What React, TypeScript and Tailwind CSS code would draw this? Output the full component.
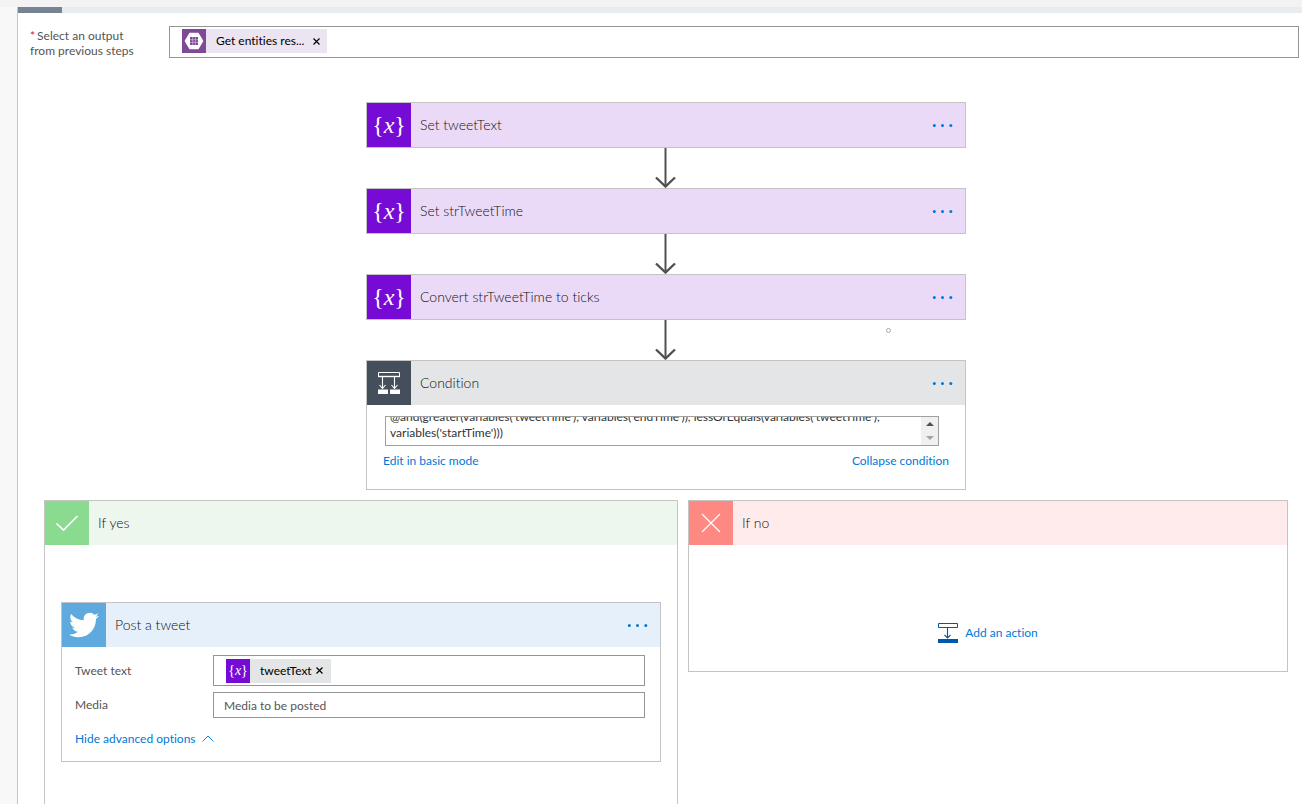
import React, { useEffect, useRef } from 'react';
import { FaTwitter } from 'react-icons/fa';

const expression =
  "@and(greater(variables('tweetTime'), variables('endTime')), lessOrEquals(variables('tweetTime'), variables('startTime')))";

function VariableIcon({ small = false }: { small?: boolean }) {
  return (
    <span
      className={`flex shrink-0 items-center justify-center bg-[#770bd6] text-white font-['Liberation_Serif',serif] ${
        small ? 'h-6 w-6 text-sm leading-6' : 'h-11 w-[44px] text-2xl leading-10'
      }`}
      aria-hidden="true"
    >
      {'{'}
      <i>x</i>
      {'}'}
    </span>
  );
}

function EntityIcon() {
  return (
    <svg className="h-6 w-6 shrink-0 bg-[#804998]" viewBox="0 0 24 24" aria-hidden="true">
      <path d="M8 4.5h8l4.5 7.5-4.5 7.5H8L3.5 12z" fill="#fff" stroke="#fff" strokeWidth="1.5" strokeLinejoin="round" />
      <path d="M8 8h8v8H8z" fill="#804998" />
      <path d="M10.7 8v8M13.4 8v8M8 10.7h8M8 13.4h8" stroke="#cdb5d8" strokeWidth="0.7" />
    </svg>
  );
}

function ConditionIcon() {
  return (
    <span className="flex h-11 w-[44px] shrink-0 items-center justify-center bg-[#454f5b]">
      <svg width="22" height="22" viewBox="0 0 22 22" fill="none" stroke="#fff" aria-hidden="true">
        <path d="M.5 .5h21v4H.5z" strokeWidth="1" />
        <path d="M0 4.5h22" strokeWidth="1.4" />
        <path d="M4.5 5v11M1.5 13l3 3.5 3-3.5M16.5 5v11M13.5 13l3 3.5 3-3.5" strokeWidth="1.1" />
        <path d="M0 17.5h10V22H0zM12 17.5h10V22H12z" fill="#fff" stroke="none" />
      </svg>
    </span>
  );
}

function Arrow() {
  return (
    <svg className="mx-auto block" width="24" height="40" viewBox="0 0 24 40" fill="none" stroke="#505050" aria-hidden="true">
      <path d="M11.5 0v38" strokeWidth="2" />
      <path d="M2 29.5l9.5 9 9.5-9" strokeWidth="2.4" />
    </svg>
  );
}

function MenuButton() {
  return (
    <button type="button" aria-label="Menu" className="mr-[10px] ml-auto flex h-6 w-6 items-center justify-center">
      <svg width="22" height="4" viewBox="0 0 22 4" fill="#0078d7" aria-hidden="true">
        <circle cx="2.3" cy="2.5" r="1.5" />
        <circle cx="10.5" cy="2.5" r="1.5" />
        <circle cx="18.8" cy="2.5" r="1.5" />
      </svg>
    </button>
  );
}

function Title({ children }: { children: React.ReactNode }) {
  return <h2 className="ml-[9px] text-[14px] leading-5 font-light text-[#111]">{children}</h2>;
}

function VariableStep({ title }: { title: string }) {
  return (
    <>
      <section className="mx-auto flex w-full max-w-[600px] items-center border border-[#c4c4c4] bg-[#ebdaf7]">
        <VariableIcon />
        <Title>{title}</Title>
        <MenuButton />
      </section>
      <Arrow />
    </>
  );
}

function RemoveButton({ label }: { label: string }) {
  return (
    <button type="button" aria-label={label} className="flex h-4 w-4 items-center justify-center">
      <svg width="7" height="7" viewBox="0 0 7 7" stroke="currentColor" strokeWidth="1.2" aria-hidden="true">
        <path d="M.5 .5l6 6M6.5 .5l-6 6" />
      </svg>
    </button>
  );
}

function ConditionCard() {
  const boxRef = useRef<HTMLTextAreaElement>(null);

  const scroll = (amount: number) => {
    if (boxRef.current) boxRef.current.scrollTop += amount;
  };

  useEffect(() => {
    if (boxRef.current) boxRef.current.scrollTop = 10;
  }, []);

  return (
    <section className="mx-auto w-full max-w-[600px] border border-[#c4c4c4] bg-white">
      <header className="flex items-center bg-[#e3e5e6]">
        <ConditionIcon />
        <Title>Condition</Title>
        <MenuButton />
      </header>
      <div className="px-4 pt-[11px] pb-[19px]">
        <div className="mr-[10px] ml-0.5 flex h-[30px] border border-[#a0a0a0]">
          <textarea
            ref={boxRef}
            aria-label="Condition expression"
            defaultValue={expression}
            className="block h-7 min-w-0 flex-1 resize-none overflow-hidden px-1 pt-0.5 pb-1 text-[12px] leading-4 text-[#333] outline-none"
          />
          <div className="flex w-[17px] flex-col bg-[#f0f0f0]">
            <button type="button" aria-label="Scroll up" onClick={() => scroll(-16)} className="flex flex-1 items-center justify-center">
              <svg width="8" height="4" viewBox="0 0 8 4" fill="#505050"><path d="M0 4l4-4 4 4z" /></svg>
            </button>
            <button type="button" aria-label="Scroll down" onClick={() => scroll(16)} className="flex flex-1 items-center justify-center">
              <svg width="8" height="4" viewBox="0 0 8 4" fill="#a3a3a3"><path d="M0 0l4 4 4-4z" /></svg>
            </button>
          </div>
        </div>
        <div className="mt-1.5 flex justify-between text-[12px] leading-[18px] text-[#0078d7]">
          <button type="button">Edit in basic mode</button>
          <button type="button">Collapse condition</button>
        </div>
      </div>
    </section>
  );
}

function PostTweetCard() {
  return (
    <section className="border border-[#c4c4c4] bg-white">
      <header className="flex items-center bg-[#e6f0fa]">
        <span className="flex h-11 w-[44px] shrink-0 items-center justify-center bg-[#5ea9dd] text-white">
          <FaTwitter size={30} aria-hidden="true" />
        </span>
        <Title>Post a tweet</Title>
        <MenuButton />
      </header>
      <div className="px-[13px] pt-2 pb-[13px] text-[12px] leading-[18px] text-[#555]">
        <div className="flex items-center">
          <label htmlFor="tweet-text" className="w-[138px] shrink-0">Tweet text</label>
          <div className="mr-0.5 flex h-[31px] min-w-0 flex-1 items-center border border-[#959595] pl-3">
            <span className="flex h-6 shrink-0 items-center bg-[#e3e5e6] pr-[3px] text-black">
              <VariableIcon small />
              <span className="ml-2.5">tweetText</span>
              <RemoveButton label="Remove tweetText" />
            </span>
            <input id="tweet-text" type="text" className="h-6 min-w-0 flex-1 outline-none" />
          </div>
        </div>
        <div className="mt-1.5 flex items-center">
          <label htmlFor="media" className="w-[138px] shrink-0">Media</label>
          <input
            id="media"
            type="text"
            placeholder="Media to be posted"
            className="mr-0.5 h-[26px] min-w-0 flex-1 border border-[#959595] px-2.5 outline-none placeholder:text-[#555]"
          />
        </div>
        <button type="button" className="mt-3 flex items-center gap-1.5 text-[#0078d7]">
          Hide advanced options
          <svg width="12" height="8" viewBox="0 0 12 8" fill="none" stroke="currentColor" strokeWidth="0.9" aria-hidden="true">
            <path d="M.5 6.5L6 1l5.5 5.5" />
          </svg>
        </button>
      </div>
    </section>
  );
}

export default function App() {
  return (
    <div className="flex h-screen flex-col overflow-hidden bg-[#f8f8f8] font-['Lato','Open_Sans',sans-serif] [font-variant-ligatures:none]">
      <div className="h-[7px] shrink-0 bg-[#f3f3f3]" />
      <main className="ml-[17px] min-h-0 flex-1 border-l border-[#c4c4c4] bg-white">
        <div className="h-1.5 bg-[#e9ecef]">
          <div className="h-1.5 w-11 bg-[#768394]" />
        </div>

        <div className="mt-[13px] mr-[3px] ml-3 flex items-start">
          <label htmlFor="output" className="mt-[2px] w-[139px] shrink-0 text-[12px] leading-[15px] text-[#555]">
            <span className="mr-0.5 text-[#e81123]">*</span>Select an output
            <br />
            from previous steps
          </label>
          <div className="flex h-8 min-w-0 flex-1 items-start border border-[#959595] pt-0.5 pl-3">
            <span className="flex h-6 shrink-0 items-center bg-[#ece4f0] pr-[3px] text-[12px] leading-[18px] text-black">
              <EntityIcon />
              <span className="mr-1 ml-2.5">Get entities res...</span>
              <RemoveButton label="Remove Get entities result" />
            </span>
            <input id="output" type="text" className="h-6 min-w-0 flex-1 outline-none" />
          </div>
        </div>

        <div className="mt-11 mr-[14px] ml-[26px]">
          <VariableStep title="Set tweetText" />
          <VariableStep title="Set strTweetTime" />
          <div className="relative">
            <VariableStep title="Convert strTweetTime to ticks" />
            <span className="absolute bottom-[27px] left-1/2 ml-[220px] h-[5px] w-[5px] rounded-full border border-[#a9a3b8]" />
          </div>
          <ConditionCard />

          <div className="mt-2.5 flex items-start gap-2.5">
            <section className="min-w-0 flex-1 border border-[#c4c4c4] bg-white">
              <header className="flex items-center bg-[#edf7ee]">
                <span className="flex h-11 w-[44px] shrink-0 items-center justify-center bg-[#8ada8f]">
                  <svg width="24" height="18" viewBox="0 0 24 18" fill="none" stroke="#fff" strokeWidth="1.7" aria-hidden="true">
                    <path d="M1.5 9.5l7 6.5L22.5 2" />
                  </svg>
                </span>
                <Title>If yes</Title>
              </header>
              <div className="px-4 pt-[57px] pb-20">
                <PostTweetCard />
              </div>
            </section>

            <section className="min-w-0 flex-1 border border-[#c4c4c4] bg-white lg:max-w-[600px]">
              <header className="flex items-center bg-[#ffebeb]">
                <span className="flex h-11 w-[44px] shrink-0 items-center justify-center bg-[#fd8982]">
                  <svg width="20" height="20" viewBox="0 0 20 20" fill="none" stroke="#fff" strokeWidth="1.2" aria-hidden="true">
                    <path d="M1 1l18 18M19 1L1 19" />
                  </svg>
                </span>
                <Title>If no</Title>
              </header>
              <div className="flex justify-center pt-[78px] pb-7">
                <button type="button" className="flex h-5 items-center gap-[7px] text-[12px] leading-[18px] text-[#0078d7]">
                  <svg width="20" height="20" viewBox="0 0 20 20" fill="none" stroke="#0058ad" aria-hidden="true">
                    <path d="M.5 .5h19v4H.5z" />
                    <path d="M9.5 5v10M6.5 12l3 3 3-3" strokeWidth="1.1" />
                    <path d="M0 16h20v4H0z" fill="#0058ad" stroke="none" />
                  </svg>
                  Add an action
                </button>
              </div>
            </section>
          </div>
        </div>
      </main>
    </div>
  );
}
